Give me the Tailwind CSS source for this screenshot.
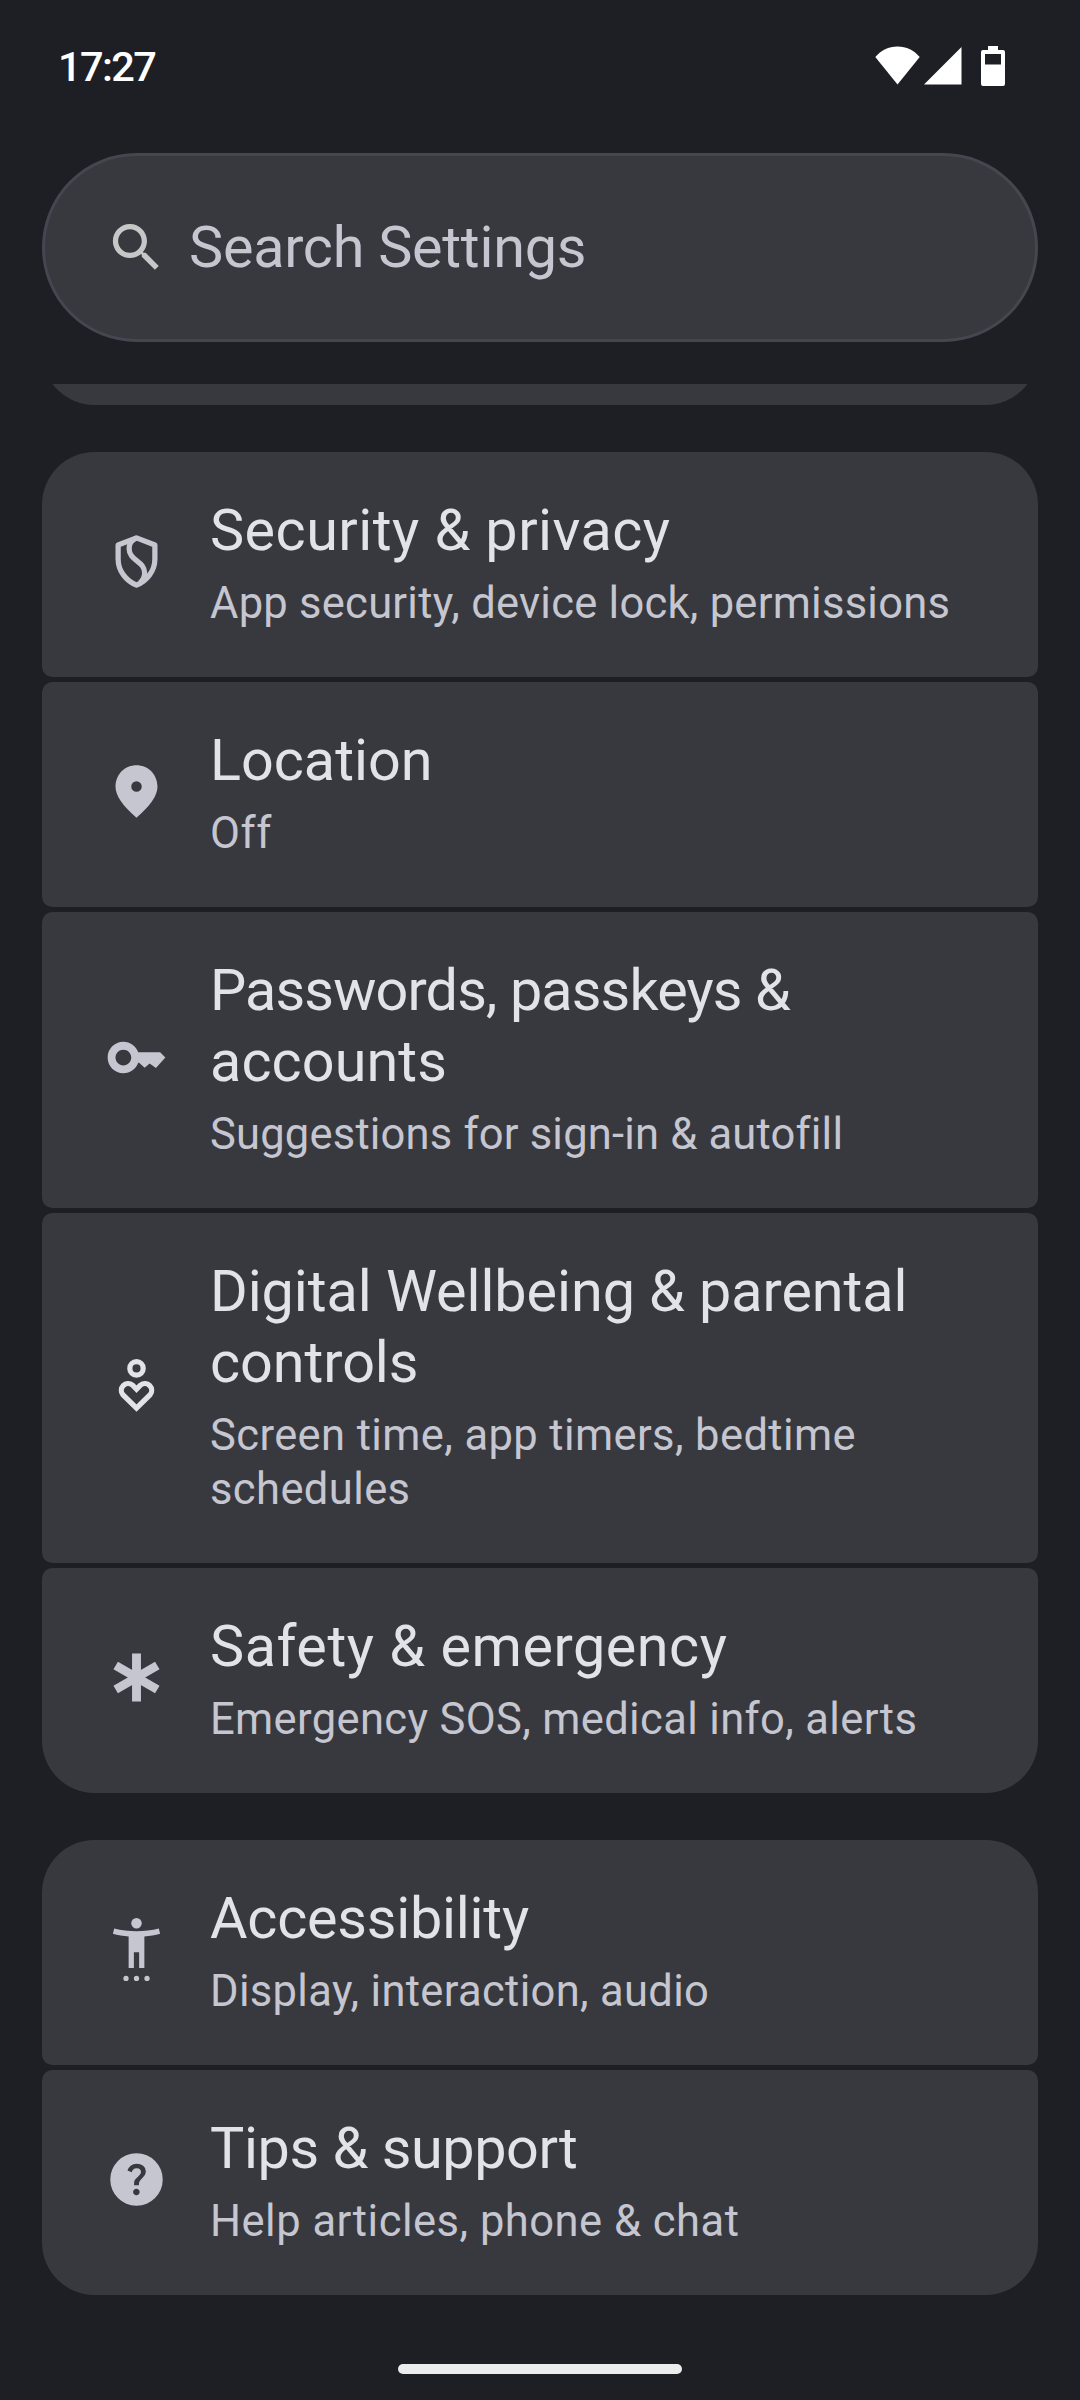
<!DOCTYPE html>
<html lang="en">
<head>
<meta charset="utf-8">
<meta name="viewport" content="width=device-width, initial-scale=1">
<title>Settings</title>
<script src="https://cdn.jsdelivr.net/npm/@tailwindcss/browser@4"></script>
</head>
<body class="bg-[#1e1f25]">
<div class="flex h-[2400px] w-[1080px] flex-col overflow-hidden bg-[#1e1f25] font-['Roboto',sans-serif] text-[#c5c6d0]">

  <!-- Status bar -->
  <header class="flex h-[153px] shrink-0 items-start justify-between pt-[46px] pr-[75px] pl-[58px] text-white">
    <time class="text-[41.5px] leading-[41px] font-medium tracking-[-1.6px]">17:27</time>
    <div class="flex h-10 items-start">
      <svg class="h-10 w-[45px]" viewBox="0 0 45 40" fill="currentColor"><path d="M22.5 38.5 0.3 11C6 4 13.500 .4 22.500 .4S39 4 44.700 11Z"/></svg>
      <svg class="ml-[4px] h-10 w-[38px]" viewBox="0 0 38 40" fill="currentColor"><path d="M37.500 1V38.600H0Z"/></svg>
      <svg class="ml-[19px] h-10 w-6" viewBox="0 0 24 40" fill="currentColor"><path fill-rule="evenodd" d="M7 0H17V4H22Q24 4 24 6V38Q24 40 22 40H2Q0 40 0 38V6Q0 4 2 4H7ZM4 8V18.500H20V8Z"/></svg>
    </div>
  </header>

  <!-- Search -->
  <div class="mx-[42px] flex h-[189px] shrink-0 items-center rounded-full border-3 border-[#45464f] bg-[#38393f] pl-[60px]">
    <svg class="size-[63px] text-[#c7c7c7]" viewBox="0 0 24 24" fill="currentColor"><path d="M15.500 14h-.79l-.28-.27C15.410 12.590 16 11.110 16 9.500 16 5.910 13.090 3 9.500 3S3 5.910 3 9.500 5.910 16 9.500 16c1.610 0 3.090-.59 4.230-1.570l.27.28v.79l5 4.990L20.490 19l-4.990-5zm-6 0C7.010 14 5 11.990 5 9.500S7.010 5 9.500 5 14 7.010 14 9.500 11.990 14 9.500 14z"/></svg>
    <span class="ml-[21px] text-[57.5px] leading-[71px] tracking-[-0.25px]">Search Settings</span>
  </div>

  <!-- Scrolling list -->
  <main class="mt-[42px] flex h-[1911px] shrink-0 flex-col gap-[47px] overflow-hidden px-[42px]">
    <div class="flex h-[21px] shrink-0 items-end overflow-hidden">
      <div class="h-[105px] w-full shrink-0 rounded-b-[52.5px] bg-[#38393f]"></div>
    </div>

    <section class="flex flex-col gap-[5px]">
      <div class="flex h-[225px] items-center rounded-t-[52.5px] rounded-b-[10.5px] bg-[#38393f] pt-[43px] pb-[46px] pl-[63px]">
        <svg class="mb-[3px] size-[63px] shrink-0" viewBox="0 0 24 24" fill="none" stroke="currentColor" stroke-width="2" stroke-linejoin="round"><path d="M12 3 19 5.700V11C19 15.600 16 19.300 12 21 8 19.300 5 15.600 5 11V5.700Z"/><path d="M12 3C10 4 9.200 5 9.200 7.100c0 4.700 5.900 4.600 5.900 9.300 0 1.500-.6 2.700-1.700 3.700"/></svg>
        <div class="ml-[42px] whitespace-nowrap">
          <h2 class="text-[57.5px] leading-[71px] tracking-[0.47px] text-[#e2e2e9]">Security &amp; privacy</h2>
          <p class="mt-[11px] text-[43.5px] leading-[54px] tracking-[0.26px]">App security, device lock, permissions</p>
        </div>
      </div>

      <div class="flex h-[225px] items-center rounded-[10.5px] bg-[#38393f] pt-[43px] pb-[46px] pl-[63px]">
        <svg class="mb-[3px] size-[63px] shrink-0" viewBox="0 0 24 24" fill="currentColor"><path fill-rule="evenodd" d="M12 2c-4.200 0-8 3.220-8 8.200 0 3.320 2.670 7.250 8 11.800 5.330-4.550 8-8.480 8-11.800C20 5.220 16.200 2 12 2zm0 10.100a2 2 0 1 1 0-4 2 2 0 0 1 0 4z"/></svg>
        <div class="ml-[42px] whitespace-nowrap">
          <h2 class="text-[57.5px] leading-[71px] text-[#e2e2e9]">Location</h2>
          <p class="mt-[11px] text-[43.5px] leading-[54px] tracking-[0.6px]">Off</p>
        </div>
      </div>

      <div class="flex h-[296px] items-center rounded-[10.5px] bg-[#38393f] pt-[43px] pb-[46px] pl-[63px]">
        <svg class="mb-[3px] size-[63px] shrink-0" viewBox="0 0 24 24" fill="currentColor"><path fill-rule="evenodd" d="M21 10h-8.350C11.830 7.670 9.610 6 7 6c-3.310 0-6 2.690-6 6s2.690 6 6 6c2.610 0 4.830-1.670 5.650-4H13l2.100 1.900L17 14.300l2.400 1.700L23 12zM7 15c-1.650 0-3-1.350-3-3s1.350-3 3-3 3 1.350 3 3-1.350 3-3 3z"/></svg>
        <div class="ml-[42px] whitespace-nowrap">
          <h2 class="text-[57.5px] leading-[71px] text-[#e2e2e9]"><span class="tracking-[-0.85px]">Passwords, passkeys &amp;</span><br><span class="tracking-[0.1px]">accounts</span></h2>
          <p class="mt-[11px] text-[43.5px] leading-[54px] tracking-[0.2px]">Suggestions for sign-in &amp; autofill</p>
        </div>
      </div>

      <div class="flex h-[350px] items-center rounded-[10.5px] bg-[#38393f] pt-[43px] pb-[46px] pl-[63px]">
        <svg class="mb-[3px] size-[63px] shrink-0 text-[#e2e2e9]" viewBox="0 0 24 24" fill="none" stroke="currentColor" stroke-width="2"><circle cx="12" cy="5.500" r="2.550"/><path d="M12 13.400 10.400 11.800A2.600 2.600 0 0 0 6.800 15.500L12 20.600 17.200 15.500A2.600 2.600 0 0 0 13.600 11.800Z"/></svg>
        <div class="ml-[42px] whitespace-nowrap">
          <h2 class="text-[57.5px] leading-[71px] tracking-[-0.05px] text-[#e2e2e9]">Digital Wellbeing &amp; parental<br>controls</h2>
          <p class="mt-[11px] text-[43.5px] leading-[54px] tracking-[0.4px]">Screen time, app timers, bedtime<br>schedules</p>
        </div>
      </div>

      <div class="flex h-[225px] items-center rounded-t-[10.5px] rounded-b-[52.5px] bg-[#38393f] pt-[43px] pb-[46px] pl-[63px]">
        <svg class="mb-[3px] size-[63px] shrink-0" viewBox="0 0 24 24" fill="none" stroke="currentColor" stroke-width="3.400"><path d="M12 2.850V21.150"/><path d="M12 2.850V21.150" transform="rotate(60 12 12)"/><path d="M12 2.850V21.150" transform="rotate(120 12 12)"/></svg>
        <div class="ml-[42px] whitespace-nowrap">
          <h2 class="text-[57.5px] leading-[71px] tracking-[0.54px] text-[#e2e2e9]">Safety &amp; emergency</h2>
          <p class="mt-[11px] text-[43.5px] leading-[54px] tracking-[0.36px]">Emergency SOS, medical info, alerts</p>
        </div>
      </div>
    </section>

    <section class="flex flex-col gap-[5px]">
      <div class="flex h-[225px] items-center rounded-t-[52.5px] rounded-b-[10.5px] bg-[#38393f] pt-[43px] pb-[46px] pl-[63px]">
        <svg class="mb-[3px] size-[63px] shrink-0" viewBox="0 0 24 24" fill="currentColor"><path d="M20.500 4c-2.610.7-5.670 1-8.500 1s-5.890-.3-8.500-1L3 6c1.860.5 4 .83 6 1v12h2v-6h2v6h2V7c2-.17 4.140-.5 6-1l-.5-2z"/><circle cx="12" cy="2" r="2"/><circle cx="8" cy="23" r="1"/><circle cx="12" cy="23" r="1"/><circle cx="16" cy="23" r="1"/></svg>
        <div class="ml-[42px] whitespace-nowrap">
          <h2 class="text-[57.5px] leading-[71px] tracking-[-0.22px] text-[#e2e2e9]">Accessibility</h2>
          <p class="mt-[11px] text-[43.5px] leading-[54px] tracking-[0.33px]">Display, interaction, audio</p>
        </div>
      </div>

      <div class="flex h-[225px] items-center rounded-t-[10.5px] rounded-b-[52.5px] bg-[#38393f] pt-[43px] pb-[46px] pl-[63px]">
        <svg class="mb-[3px] size-[63px] shrink-0" viewBox="0 -960 960 960" fill="currentColor"><path d="M478-240q21 0 35.500-14.500T528-290q0-21-14.500-35.500T478-340q-21 0-35.500 14.500T428-290q0 21 14.500 35.500T478-240Zm-36-154h74q0-33 7.500-52t42.500-52q26-26 41-49.500t15-56.500q0-56-41-86t-97-30q-57 0-92.500 30T342-618l66 26q5-18 22.500-39t53.500-21q32 0 48 17.500t16 38.500q0 20-12 37.500T506-526q-44 39-54 59t-10 73Zm38 314q-83 0-156-31.500T197-197q-54-54-85.500-127T80-480q0-83 31.500-156T197-763q54-54 127-85.500T480-880q83 0 156 31.500T763-763q54 54 85.500 127T880-480q0 83-31.500 156T763-197q-54 54-127 85.500T480-80Z"/></svg>
        <div class="ml-[42px] whitespace-nowrap">
          <h2 class="text-[57.5px] leading-[71px] tracking-[-0.4px] text-[#e2e2e9]">Tips &amp; support</h2>
          <p class="mt-[11px] text-[43.5px] leading-[54px] tracking-[0.5px]">Help articles, phone &amp; chat</p>
        </div>
      </div>
    </section>
  </main>

  <!-- Gesture bar -->
  <footer class="flex flex-1 items-start justify-center pt-[69px]">
    <div class="h-[10px] w-[284px] rounded-full bg-[#ececec]"></div>
  </footer>
</div>
</body>
</html>
